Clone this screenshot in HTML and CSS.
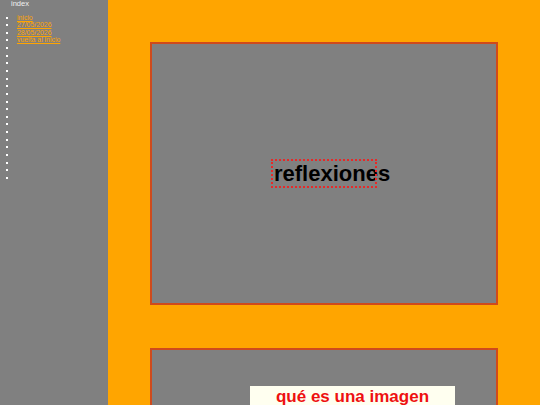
FILE: index.html
```html
<!DOCTYPE html>
<html lang="es">
<head>
<meta charset="utf-8">
<title>index</title>
<link rel="stylesheet" href="styles.css">
</head>
<body>
<div class="page">
  <nav class="sidebar">
    <div class="title">index</div>
    <ul class="menu">
      <li><a href="#">inicio</a></li>
      <li><a href="#">27/05/2026</a></li>
      <li><a href="#">28/05/2026</a></li>
      <li><a href="#">vuelta al inicio</a></li>
      <li></li><li></li><li></li><li></li><li></li><li></li>
      <li></li><li></li><li></li><li></li><li></li><li></li>
      <li></li><li></li><li></li><li></li><li></li><li></li>
    </ul>
  </nav>
  <main class="main">
    <section class="panel panel-first">
      <a class="heading" href="#">reflexiones</a>
    </section>
    <section class="panel panel-second">
      <div class="card">qué es una imagen</div>
    </section>
  </main>
</div>
</body>
</html>
```
FILE: styles.css
```css
html, body {
  margin: 0;
  padding: 0;
  height: 100%;
  overflow: hidden;
}
body {
  font-family: "Liberation Sans", Arial, sans-serif;
  background: #ffa500;
}
.page {
  display: flex;
  height: 100%;
}
.sidebar {
  width: 108px;
  flex: none;
  background: #808080;
  color: #f0f0f0;
}
.title {
  font-size: 7.5px;
  line-height: 8px;
  padding: 0 0 0 11px;
}
.menu {
  margin: 5.5px 0 0 0;
  padding: 0 0 0 17px;
  list-style: square;
  font-size: 6.9px;
  line-height: 7.65px;
  color: #ffffff;
}
.menu li {
  height: 7.65px;
}
.menu a {
  color: #ffa500;
  text-decoration: underline;
}
.main {
  flex: 1;
  display: flex;
  flex-direction: column;
  gap: 43px;
  padding: 42px 0 0 42px;
}
.panel {
  flex: none;
  width: 348px;
  box-sizing: border-box;
  background: #808080;
  border: 2px solid #cf4a1c;
}
.panel-first {
  height: 263px;
  display: flex;
  align-items: center;
  justify-content: center;
}
.heading {
  display: block;
  width: 104px;
  height: 27px;
  box-sizing: border-box;
  outline: 2px dotted #e82828;
  outline-offset: -1px;
  color: #000000;
  text-decoration: none;
  font-weight: bold;
  font-size: 22px;
  line-height: 27px;
  white-space: nowrap;
  padding-left: 2px;
}
.panel-second {
  height: 200px;
  padding: 36px 0 0 98px;
}
.card {
  width: 205px;
  background: #fffff0;
  color: #ee1111;
  font-weight: bold;
  font-size: 17px;
  line-height: 22px;
  text-align: center;
}
```
